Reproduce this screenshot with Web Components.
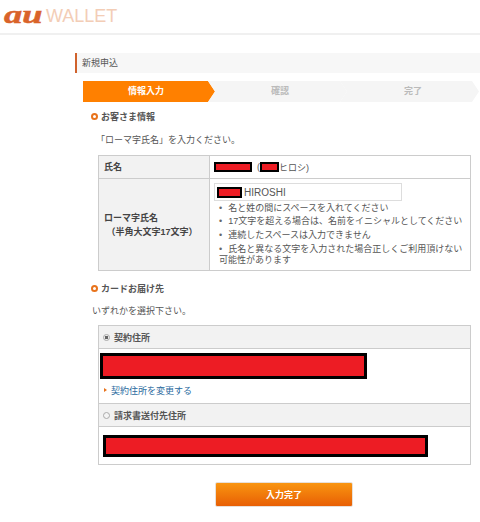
<!DOCTYPE html>
<html lang="ja">
<head>
<meta charset="utf-8">
<title>au WALLET</title>
<style>
    html, body { margin: 0; padding: 0; background: #fff; }
    body {
        width: 480px;
        height: 522px;
        overflow: hidden;
        font-family: "Liberation Sans", "Noto Sans CJK JP", sans-serif;
        font-size: 9px;
        color: #555;
    }
    main { display: block; padding: 18px 0 0 75px; }
    .lead { display: block; padding: 11px 0 0 21px; height: 21px; line-height: 13px; }
    .lead.second { padding-top: 10px; height: 20px; }
    .name-row { display: flex; align-items: center; }
    .paren { margin-left: 5px; }
    .rule { margin: 0; padding: 0 0 0 5px; list-style: none; line-height: 13.3px; }
    .rule li::before { content: "•"; margin-right: 6px; color: #666; }
    .rule li.wrap { line-height: 11px; padding-top: 2px; margin-left: -5px; padding-left: 5px; }
</style>
</head>
<body>
<template id="t-header">
    <style>
        :host { display: flex; align-items: flex-start; height: 33px; border-bottom: 2px solid #f0f0f0; padding-left: 4px; }
        .au { display: block; font: italic bold 26px/29px "Liberation Serif", serif; -webkit-text-stroke: .5px #d9632a; color: #d9632a; transform: scaleX(1.4); transform-origin: left; width: 42px; }
        .wallet { display: block; font: 18px/18px "Liberation Sans", sans-serif; color: #f3cdb6; margin-top: 7px; }
    </style>
    <span class="au">au</span><span class="wallet">WALLET</span>
</template>

<template id="t-title">
    <style>
        :host { display: block; height: 20px; line-height: 20px; background: #f7f7f7; border-left: 2px solid #d0622c; padding-left: 5px; font-size: 9px; color: #555; }
    </style>
    <slot></slot>
</template>

<template id="t-steps">
    <style>
        :host { display: flex; margin: 8px 0 0 8px; width: 397px; height: 21px; }
    </style>
    <slot></slot>
</template>

<template id="t-step">
    <style>
        :host { display: block; box-sizing: border-box; flex: 0 0 132px; height: 21px; line-height: 21px; text-align: center; font-size: 9px; font-weight: bold; color: #bbb; background: #f5f5f5; clip-path: polygon(0 0, 125px 0, 132px 50%, 125px 100%, 0 100%); }
        :host([active]) { background: #ff8000; color: #fff; padding-right: 6px; }
        :host(:not(:first-child)) { margin-left: -7px; flex-basis: 139px; clip-path: polygon(0 0, 132px 0, 139px 50%, 132px 100%, 0 100%, 7px 50%); padding-left: 5px; }
        :host(:last-child) { padding-left: 7px; }
    </style>
    <slot></slot>
</template>

<template id="t-section">
    <style>
        :host { display: flex; align-items: center; margin-left: 16px; height: 14px; font-size: 9px; font-weight: bold; color: #555; gap: 3px; }
        i { display: block; width: 3px; height: 3px; border: 2px solid #e8731c; border-radius: 50%; }
    </style>
    <i></i><slot></slot>
</template>

<template id="t-redact">
    <style>
        :host { display: block; box-sizing: border-box; background: #ed1c24; border: 2px solid #000; height: var(--h, 9px); width: var(--w, 38px); }
    </style>
</template>

<template id="t-form-table">
    <style>
        :host { display: grid; grid-template-columns: 111px 1fr; margin: 0 0 0 23px; width: 373px; box-sizing: border-box; border: 1px solid #ccc; }
    </style>
    <slot></slot>
</template>

<template id="t-form-row">
    <style>
        :host { display: contents; }
        .label { display: flex; align-items: center; background: #f2f2f2; border-right: 1px solid #ccc; padding-left: 5px; font-weight: bold; color: #444; line-height: 14px; height: var(--rh); box-sizing: border-box; }
        .value { padding: 0 4px; height: var(--rh); box-sizing: border-box; }
        :host(:not(:last-child)) .label, :host(:not(:last-child)) .value { border-bottom: 1px solid #ccc; }
    </style>
    <div class="label"><slot name="label"></slot></div>
    <div class="value"><slot></slot></div>
</template>

<template id="t-text-field">
    <style>
        :host { display: flex; align-items: center; width: 188px; height: 18px; box-sizing: border-box; border: 1px solid #ddd; padding-left: 2px; gap: 2px; font-size: 10px; color: #555; margin: 4px 0 1px; }
    </style>
    <slot></slot>
</template>

<template id="t-address-box">
    <style>
        :host { display: block; margin-left: 23px; width: 373px; box-sizing: border-box; border: 1px solid #ccc; }
    </style>
    <slot></slot>
</template>

<template id="t-address-head">
    <style>
        :host { display: flex; align-items: center; gap: 4px; height: 23px; box-sizing: border-box; padding-left: 4px; background: #f2f2f2; border-bottom: 1px solid #ccc; font-weight: bold; color: #555; }
        i { display: block; box-sizing: border-box; width: 7px; height: 7px; border-radius: 50%; border: 1px solid #aaa; background: #f4f4f4; }
        :host([checked]) i { background: radial-gradient(circle, #666 0 1.5px, #eee 2px); }
    </style>
    <i></i><slot></slot>
</template>

<template id="t-address-body">
    <style>
        :host { display: block; box-sizing: border-box; height: var(--bh); padding: var(--bp); }
        :host([ruled]) { border-bottom: 1px solid #ccc; }
    </style>
    <slot></slot>
</template>

<template id="t-link">
    <style>
        :host { display: flex; align-items: center; gap: 4px; margin: 5px 0 0 4px; height: 12px; color: #2a6a9e; }
        i { display: block; width: 0; height: 0; border-left: 3px solid #e8731c; border-top: 2px solid transparent; border-bottom: 2px solid transparent; }
    </style>
    <i></i><slot></slot>
</template>

<template id="t-submit">
    <style>
        :host { display: block; margin: 17px 0 0 140px; width: 138px; height: 25px; line-height: 25px; text-align: center; border-radius: 2px; border: 1px solid #e8e0d8; box-sizing: border-box; background: linear-gradient(#f99510, #e85f05); color: #fff; font-weight: bold; font-size: 9px; }
    </style>
    <slot></slot>
</template>

<au-header></au-header>
<main>
    <page-title>新規申込</page-title>
    <step-bar>
        <step-item active>情報入力</step-item>
        <step-item>確認</step-item>
        <step-item>完了</step-item>
    </step-bar>
    <div style="height:7px"></div>
    <section-head>お客さま情報</section-head>
    <span class="lead">「ローマ字氏名」を入力ください。</span>
    <form-table>
        <form-row style="--rh:23px">
            <span slot="label">氏名</span>
            <div class="name-row" style="height:22px">
                <redact-block style="--w:38px;--h:10px"></redact-block>
                <span class="paren">(</span>
                <redact-block style="--w:19px;--h:10px"></redact-block>
                <span>ヒロシ)</span>
            </div>
        </form-row>
        <form-row style="--rh:91px">
            <span slot="label">ローマ字氏名<br>&nbsp;（半角大文字17文字）</span>
            <text-field><redact-block style="--w:25px;--h:11px"></redact-block>HIROSHI</text-field>
            <ul class="rule">
                <li>名と姓の間にスペースを入れてください</li>
                <li>17文字を超える場合は、名前をイニシャルとしてください</li>
                <li>連続したスペースは入力できません</li>
                <li class="wrap">氏名と異なる文字を入力された場合正しくご利用頂けない<br>可能性があります</li>
            </ul>
        </form-row>
    </form-table>
    <div style="height:10px"></div>
    <section-head>カードお届け先</section-head>
    <span class="lead second" style="padding-left:17px">いずれかを選択下さい。</span>
    <address-box>
        <address-head checked>契約住所</address-head>
        <address-body ruled style="--bh:55px;--bp:4px 1px 0">
            <redact-block style="--w:267px;--h:26px;border-width:3px"></redact-block>
            <address-link>契約住所を変更する</address-link>
        </address-body>
        <address-head>請求書送付先住所</address-head>
        <address-body style="--bh:37px;--bp:8px 4px 0">
            <redact-block style="--w:325px;--h:22px;border-width:3px"></redact-block>
        </address-body>
    </address-box>
    <submit-button>入力完了</submit-button>
</main>
<script>
    const components = {
        "au-header": "t-header",
        "page-title": "t-title",
        "step-bar": "t-steps",
        "step-item": "t-step",
        "section-head": "t-section",
        "redact-block": "t-redact",
        "form-table": "t-form-table",
        "form-row": "t-form-row",
        "text-field": "t-text-field",
        "address-box": "t-address-box",
        "address-head": "t-address-head",
        "address-body": "t-address-body",
        "address-link": "t-link",
        "submit-button": "t-submit"
    };

    Object.keys(components).forEach(name => {
        const template = document.getElementById(components[name]);
        customElements.define(name, class extends HTMLElement {
            constructor() {
                super();
                this.attachShadow({ mode: "open" });
                this.shadowRoot.appendChild(template.content.cloneNode(true));
            }
        });
    });
</script>
</body>
</html>
